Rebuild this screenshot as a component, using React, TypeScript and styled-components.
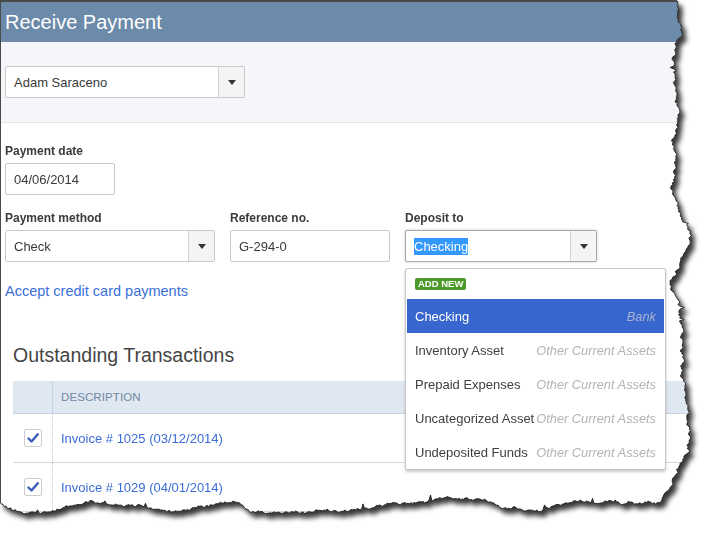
import React from "react";
import styled, { createGlobalStyle } from "styled-components";

type P = [number, number];

function mulberry32(seed: number) {
  let a = seed;
  return function () {
    a |= 0;
    a = (a + 0x6d2b79f5) | 0;
    let t = Math.imul(a ^ (a >>> 15), 1 | a);
    t = (t + Math.imul(t ^ (t >>> 7), 61 | t)) ^ t;
    return ((t ^ (t >>> 14)) >>> 0) / 4294967296;
  };
}

const interp = (c: P[], v: number) => {
  for (let i = 0; i < c.length - 1; i++) {
    const [a, av] = c[i];
    const [b, bv] = c[i + 1];
    if ((v >= a && v <= b) || (v <= a && v >= b)) {
      const t = (v - a) / (b - a || 1);
      return av + (bv - av) * t;
    }
  }
  return c[c.length - 1][1];
};

const rightCtrl: P[] = [
  [0, 677], [33, 682], [50, 673], [83, 672], [110, 680], [140, 672], [167, 675],
  [187, 672], [213, 680], [233, 692], [253, 685], [283, 670], [300, 677], [333, 683],
  [367, 682], [400, 685], [427, 690], [450, 689], [467, 678], [480, 673], [492, 666],
];
const bottomCtrl: P[] = [
  [666, 493], [660, 503], [620, 503], [580, 501], [540, 510], [500, 507], [480, 499],
  [440, 498], [400, 504], [350, 510], [300, 513], [250, 512], [237, 502], [217, 503],
  [180, 512], [120, 505], [90, 502], [60, 508], [50, 513], [17, 512], [0, 503],
];

const buildEdge = () => {
  const r = mulberry32(7);
  const pts: P[] = [];
  let j = 0;
  for (let y = 0; y <= 492; y += 1.5) {
    j = j * 0.65 + (r() - 0.5) * 3.2;
    const spike = r() < 0.04 ? (r() - 0.3) * 8 : 0;
    pts.push([interp(rightCtrl, y) + j + spike, y]);
  }
  j = 0;
  for (let x = 666; x >= 0; x -= 1.5) {
    j = j * 0.65 + (r() - 0.5) * 2.6;
    const spike = r() < 0.03 ? -r() * 5 : 0;
    pts.push([x, interp(bottomCtrl, x) + j + spike]);
  }
  return pts;
};

const EDGE = buildEdge();
const CLIP = `polygon(0px 0px, ${EDGE.map(([x, y]) => `${x.toFixed(1)}px ${y.toFixed(1)}px`).join(", ")}, 0px 503px)`;
const EDGE_POINTS = EDGE.map(([x, y]) => `${x.toFixed(1)},${y.toFixed(1)}`).join(" ");

const GlobalStyle = createGlobalStyle`
  html, body { margin: 0; padding: 0; background: #ffffff; }
  body { font-family: "Liberation Sans", Arial, Helvetica, sans-serif; }
  #root { width: 715px; height: 539px; overflow: hidden; }
  * { box-sizing: border-box; }
`;

const Wrapper = styled.div`
  position: relative;
  width: 715px;
  height: 539px;
  filter: drop-shadow(4px 5px 2.5px rgba(0, 0, 0, 0.78));
`;

const Paper = styled.div`
  width: 715px;
  height: 539px;
  background: #ffffff;
  border-top: 2px solid #4a4a4a;
  border-left: 1px solid #4a4a4a;
  clip-path: ${CLIP};
  display: flex;
  flex-direction: column;
`;

const EdgeLine = styled.svg`
  position: absolute;
  left: 0;
  top: 0;
  pointer-events: none;
`;

const Header = styled.div`
  height: 40px;
  background: #6c8aa9;
  padding-left: 4px;
  display: flex;
  align-items: center;
`;

const Title = styled.h1`
  margin: 0;
  font-size: 20px;
  font-weight: normal;
  color: #ffffff;
  line-height: 40px;
`;

const CustomerBand = styled.div`
  height: 81px;
  background: #f5f6f9;
  border-bottom: 1px solid #e2e5eb;
  padding: 24px 0 0 4px;
`;

const SelectBox = styled.div<{ $width: number; $focused?: boolean }>`
  width: ${(p) => p.$width}px;
  height: 32px;
  display: flex;
  background: #ffffff;
  border: 1px solid ${(p) => (p.$focused ? "#a9a9a9" : "#c9c9c9")};
  border-radius: 2px;
  box-shadow: ${(p) => (p.$focused ? "0 0 3px rgba(0,0,0,0.22)" : "none")};
`;

const SelectValue = styled.div`
  flex: 1;
  display: flex;
  align-items: center;
  padding: 0 8px;
  font-size: 13px;
  color: #3a3a3a;
  white-space: nowrap;
`;

const SelectButton = styled.div`
  width: 26px;
  background: #f4f4f4;
  border-left: 1px solid #d2d2d2;
  display: flex;
  align-items: center;
  justify-content: center;
`;

const Caret = styled.span`
  width: 0;
  height: 0;
  border-left: 4px solid transparent;
  border-right: 4px solid transparent;
  border-top: 5px solid #333333;
`;

const Highlight = styled.span`
  background: #3399ff;
  color: #ffffff;
  line-height: 17px;
`;

const Form = styled.div`
  padding: 21px 0 0 4px;
  display: flex;
  flex-direction: column;
`;

const Field = styled.div`
  position: relative;
  display: flex;
  flex-direction: column;
  gap: 5px;
`;

const FieldLabel = styled.label`
  font-size: 12px;
  font-weight: bold;
  line-height: 14px;
  color: #3b3b3b;
`;

const TextInput = styled.div<{ $width: number }>`
  width: ${(p) => p.$width}px;
  height: 32px;
  border: 1px solid #c9c9c9;
  border-radius: 2px;
  padding: 0 8px;
  display: flex;
  align-items: center;
  font-size: 13px;
  color: #3a3a3a;
`;

const FieldRow = styled.div`
  display: flex;
  gap: 15px;
  margin-top: 16px;
`;

const CardLink = styled.a`
  margin-top: 21px;
  font-size: 14.5px;
  line-height: 17px;
  color: #3a6fd8;
  text-decoration: none;
`;

const Section = styled.div`
  margin-top: 43px;
  padding-left: 12px;
`;

const SectionTitle = styled.h2`
  margin: 0;
  font-size: 19.5px;
  font-weight: normal;
  line-height: 24px;
  color: #454545;
`;

const Table = styled.div`
  margin-top: 14px;
  display: grid;
  grid-template-columns: 40px 1fr;
`;

const HeadCell = styled.div<{ $first?: boolean }>`
  height: 33px;
  background: #dfe7f0;
  border-bottom: 1px solid #c6d3e2;
  border-right: ${(p) => (p.$first ? "1px solid #c6d3e2" : "none")};
  display: flex;
  align-items: center;
  padding-left: 8px;
  font-size: 11.5px;
  color: #6f87a5;
  letter-spacing: 0.1px;
`;

const BodyCell = styled.div<{ $first?: boolean }>`
  height: 49px;
  border-bottom: 1px solid #d8d8d8;
  border-right: ${(p) => (p.$first ? "1px dotted #c4c4c4" : "none")};
  display: flex;
  align-items: center;
  justify-content: ${(p) => (p.$first ? "center" : "flex-start")};
  padding-left: ${(p) => (p.$first ? "0" : "8px")};
  font-size: 13px;
  color: #3b6cd6;
`;

const Checkbox = styled.span`
  width: 18px;
  height: 18px;
  border: 1px solid #cccccc;
  border-radius: 2px;
  background: #ffffff;
  display: flex;
  align-items: center;
  justify-content: center;
`;

const Dropdown = styled.div`
  position: absolute;
  top: 57px;
  left: 0;
  width: 261px;
  background: #ffffff;
  border: 1px solid #c8c8c8;
  border-radius: 2px;
  box-shadow: 0 2px 3px rgba(0, 0, 0, 0.2);
  padding: 0 1px;
  z-index: 2;
`;

const DropHeader = styled.div`
  height: 30px;
  padding: 9px 8px 0;
`;

const Badge = styled.span`
  display: inline-block;
  height: 12px;
  line-height: 12px;
  padding: 0 3px;
  background: #4c9a2a;
  border-radius: 2px;
  color: #ffffff;
  font-size: 9.5px;
  font-weight: bold;
  vertical-align: top;
`;

const Option = styled.div<{ $active?: boolean }>`
  height: 34px;
  display: flex;
  align-items: center;
  justify-content: space-between;
  padding: 0 8px;
  background: ${(p) => (p.$active ? "#3766cf" : "transparent")};
  color: ${(p) => (p.$active ? "#ffffff" : "#404040")};
  font-size: 13px;
  white-space: nowrap;
`;

const OptionType = styled.span<{ $active?: boolean }>`
  font-style: italic;
  font-size: 12.8px;
  color: ${(p) => (p.$active ? "#a7b4d2" : "#b3b3b3")};
`;

const Check = () => (
  <svg width="14" height="14" viewBox="0 0 14 14">
    <path d="M2.5 7.5 L5.5 10.5 L11.8 3.2" fill="none" stroke="#3b5cb8" strokeWidth="2.4" strokeLinecap="round" strokeLinejoin="round" />
  </svg>
);

const options = [
  { name: "Checking", type: "Bank", active: true },
  { name: "Inventory Asset", type: "Other Current Assets" },
  { name: "Prepaid Expenses", type: "Other Current Assets" },
  { name: "Uncategorized Asset", type: "Other Current Assets" },
  { name: "Undeposited Funds", type: "Other Current Assets" },
];

const invoices = ["Invoice # 1025 (03/12/2014)", "Invoice # 1029 (04/01/2014)"];

export default function App() {
  return (
    <>
      <GlobalStyle />
      <Wrapper>
        <Paper>
          <Header>
            <Title>Receive Payment</Title>
          </Header>
          <CustomerBand>
            <SelectBox $width={240}>
              <SelectValue>Adam Saraceno</SelectValue>
              <SelectButton>
                <Caret />
              </SelectButton>
            </SelectBox>
          </CustomerBand>
          <Form>
            <Field>
              <FieldLabel>Payment date</FieldLabel>
              <TextInput $width={110}>04/06/2014</TextInput>
            </Field>
            <FieldRow>
              <Field>
                <FieldLabel>Payment method</FieldLabel>
                <SelectBox $width={210}>
                  <SelectValue>Check</SelectValue>
                  <SelectButton>
                    <Caret />
                  </SelectButton>
                </SelectBox>
              </Field>
              <Field>
                <FieldLabel>Reference no.</FieldLabel>
                <TextInput $width={160}>G-294-0</TextInput>
              </Field>
              <Field>
                <FieldLabel>Deposit to</FieldLabel>
                <SelectBox $width={192} $focused>
                  <SelectValue>
                    <Highlight>Checking</Highlight>
                  </SelectValue>
                  <SelectButton>
                    <Caret />
                  </SelectButton>
                </SelectBox>
                <Dropdown>
                  <DropHeader>
                    <Badge>ADD NEW</Badge>
                  </DropHeader>
                  {options.map((o) => (
                    <Option key={o.name} $active={o.active}>
                      <span>{o.name}</span>
                      <OptionType $active={o.active}>{o.type}</OptionType>
                    </Option>
                  ))}
                </Dropdown>
              </Field>
            </FieldRow>
            <CardLink>Accept credit card payments</CardLink>
          </Form>
          <Section>
            <SectionTitle>Outstanding Transactions</SectionTitle>
            <Table>
              <HeadCell $first />
              <HeadCell>DESCRIPTION</HeadCell>
              {invoices.map((inv) => (
                <React.Fragment key={inv}>
                  <BodyCell $first>
                    <Checkbox>
                      <Check />
                    </Checkbox>
                  </BodyCell>
                  <BodyCell>{inv}</BodyCell>
                </React.Fragment>
              ))}
            </Table>
          </Section>
        </Paper>
        <EdgeLine width="715" height="539" viewBox="0 0 715 539">
          <polyline points={EDGE_POINTS} fill="none" stroke="#1e1e1e" strokeWidth="0.9" />
        </EdgeLine>
      </Wrapper>
    </>
  );
}
